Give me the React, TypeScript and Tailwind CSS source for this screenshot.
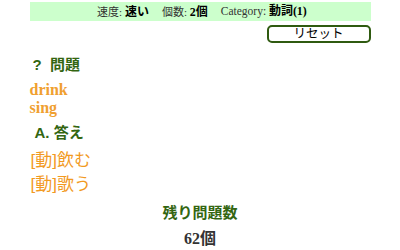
const SERIF = "font-['Liberation_Serif','Noto_Sans_CJK_JP',serif]";
const SANS = "font-['Liberation_Sans','Noto_Sans_CJK_JP',sans-serif]";

export default function App() {
  return (
    <div className="w-[341px] mx-auto pt-[2px] bg-white text-black">
      {/* Status bar */}
      <div className={`${SERIF} h-[19px] bg-[#ccffcc] flex items-center justify-center text-[11px] leading-none text-[#333] pl-[4px]`}>
        <span>
          速度: <b className="text-[12px] text-black">速い</b>
        </span>
        <span className="ml-[13px]">
          個数: <b className="text-[12px] text-black">2個</b>
        </span>
        <span className="ml-[13px]">
          <span className="text-[11.5px]">Category:</span> <b className="text-[12px] text-black">動詞(1)</b>
        </span>
      </div>

      <div className="flex justify-end mt-[4px]">
        <button
          className={`${SANS} w-[104px] h-[18px] rounded-[5px] border-2 border-[#2f5a10] bg-white text-[12.5px] leading-none text-black`}
        >
          リセット
        </button>
      </div>

      {/* Question */}
      <div className={`${SANS} mt-[12px] ml-[3px] text-[15px] font-bold text-[#336611] leading-[19px]`}>
        ?&nbsp;&nbsp;問題
      </div>
      <div className={`${SERIF} mt-[7px] text-[16px] font-bold text-[#f0a030] leading-[18px]`}>
        <div>drink</div>
        <div>sing</div>
      </div>

      {/* Answer */}
      <div className={`${SANS} mt-[7px] ml-[5px] text-[15px] font-bold text-[#336611] leading-[18px]`}>
        A. 答え
      </div>
      <div className={`${SANS} mt-[7px] ml-[1px] text-[17px] text-[#f29a1f] leading-[24px]`}>
        <div>[動]飲む</div>
        <div>[動]歌う</div>
      </div>

      {/* Remaining */}
      <div className={`${SANS} mt-[7px] text-center text-[15px] font-bold text-[#336611] leading-[18px]`}>
        残り問題数
      </div>
      <div className={`${SERIF} mt-[8px] text-center text-[16px] font-bold text-[#333] leading-[18px]`}>
        62個
      </div>
    </div>
  );
}
